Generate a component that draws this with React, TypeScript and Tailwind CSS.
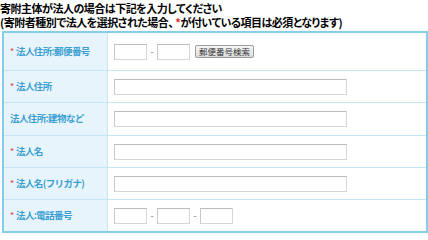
const jp = { fontFamily: '"Noto Sans CJK JP", "Liberation Sans", sans-serif' };

type Row = { label: string; required: boolean; kind: "zip" | "text" | "tel"; h: string };

const rows: Row[] = [
  { label: "法人住所:郵便番号", required: true, kind: "zip", h: "h-[37px]" },
  { label: "法人住所", required: true, kind: "text", h: "h-[32px]" },
  { label: "法人住所:建物など", required: false, kind: "text", h: "h-[33px]" },
  { label: "法人名", required: true, kind: "text", h: "h-[32px]" },
  { label: "法人名(フリガナ)", required: true, kind: "text", h: "h-[32px]" },
  { label: "法人:電話番号", required: true, kind: "tel", h: "h-[32px]" },
];

const inputCls =
  "h-[16px] bg-white border border-[#d6d6d6] border-t-[#bdbdbd] border-l-[#c8c8c8] outline-none";

function Small() {
  return <input className={`${inputCls} w-[33px]`} />;
}

function Dash() {
  return <span className="w-[10px] text-center text-[9px] text-[#777] leading-none">-</span>;
}

function Field({ kind }: { kind: Row["kind"] }) {
  if (kind === "zip") {
    return (
      <div className="flex items-center">
        <Small />
        <Dash />
        <Small />
        <button className="ml-[5px] h-[13px] w-[59px] flex items-center justify-center rounded-[2px] border border-[#9c9c9c] bg-gradient-to-b from-[#f7f7f7] to-[#dadada] text-[8.5px] leading-none text-[#333]">
          郵便番号検索
        </button>
      </div>
    );
  }
  if (kind === "tel") {
    return (
      <div className="flex items-center">
        <Small />
        <Dash />
        <Small />
        <Dash />
        <Small />
      </div>
    );
  }
  return <input className={`${inputCls} w-[233px]`} />;
}

export default function App() {
  return (
    <div className="w-[428px] h-[240px] bg-white overflow-hidden" style={jp}>
      <div className="pt-[1px] text-[11px] leading-[14px] font-semibold text-black tracking-[-0.5px] [font-feature-settings:'palt']">
        <p>寄附主体が法人の場合は下記を入力してください</p>
        <p>
          (寄附者種別で法人を選択された場合、 <span className="text-[#e02828]">*</span>が付いている項目は必須となります)
        </p>
      </div>
      <div className="mt-[2px] ml-[2px] w-[426px] border-2 border-[#86cdea]">
        {rows.map((r, i) => (
          <div
            key={r.label}
            className={`flex ${r.h} ${i > 0 ? "border-t border-[#c3e5f4]" : ""}`}
          >
            <div className="w-[104px] shrink-0 flex items-center bg-[#e7f4fb] border-r border-[#c3e5f4] pl-[6px]">
              {r.required ? (
                <span className="w-[6px] text-[9px] leading-none text-[#e23a3a]">*</span>
              ) : null}
              <span className="text-[9.5px] font-bold text-[#3a9fd2] tracking-[-0.6px] leading-none">
                {r.label}
              </span>
            </div>
            <div className="flex-1 flex items-center pl-[6px]">
              <Field kind={r.kind} />
            </div>
          </div>
        ))}
      </div>
    </div>
  );
}
